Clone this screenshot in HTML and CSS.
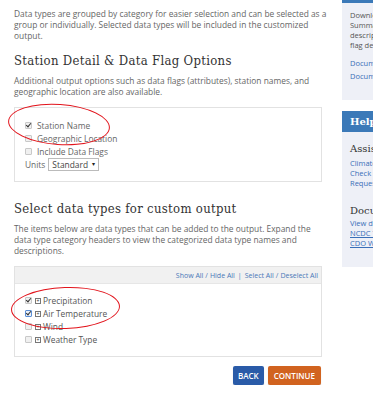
FILE: index.html
```html
<!DOCTYPE html>
<html lang="en">

<head>
  <meta charset="UTF-8" />
  <meta name="viewport" content="width=device-width, initial-scale=1.0" />
  <title>Custom Output</title>
  <link rel="stylesheet" href="styles.css">
</head>

<body>
  <div class="page">
    <div class="main">
      <p class="intro">Data types are grouped by category for easier selection and can be selected as a group or individually. Selected data types will be included in the customized output.</p>

      <h2>Station Detail &amp; Data Flag Options</h2>
      <p>Additional output options such as data flags (attributes), station names, and geographic location are also available.</p>

      <div class="box options">
        <div class="row"><span class="check on"></span>Station Name</div>
        <div class="row"><span class="check"></span>Geographic Location</div>
        <div class="row"><span class="check"></span>Include Data Flags</div>
        <div class="row">Units <span class="select">Standard <span class="arrow">&#9662;</span></span></div>
        <div class="circle circle-one"></div>
      </div>

      <h2 class="second">Select data types for custom output</h2>
      <p>The items below are data types that can be added to the output. Expand the data type category headers to view the categorized data type names and descriptions.</p>

      <div class="box types">
        <div class="box-head">
          <a href="#">Show All</a> / <a href="#">Hide All</a> <span class="sep">|</span> <a href="#">Select All</a> / <a href="#">Deselect All</a>
        </div>
        <div class="box-body">
          <div class="row"><span class="check on"></span><span class="plus">+</span>Precipitation</div>
          <div class="row"><span class="check on blue"></span><span class="plus">+</span>Air Temperature</div>
          <div class="row"><span class="check"></span><span class="plus">+</span>Wind</div>
          <div class="row"><span class="check"></span><span class="plus">+</span>Weather Type</div>
        </div>
        <div class="circle circle-two"></div>
      </div>

      <div class="actions">
        <button class="btn back">BACK</button>
        <button class="btn continue">CONTINUE</button>
      </div>
    </div>

    <div class="side">
      <div class="panel first">
        <p>Download the<br>Summary file<br>descriptions and<br>flag definitions</p>
        <a href="#">Documentation</a>
        <a href="#">Documentation</a>
      </div>

      <div class="panel help">
        <div class="panel-head">Help</div>
        <h3>Assistance</h3>
        <a href="#">Climate Data</a>
        <a href="#">Check Order</a>
        <a href="#">Request Help</a>
        <h3 class="docs">Documentation</h3>
        <a href="#">View data</a>
        <a href="#" class="under">NCDC Tools</a>
        <a href="#" class="under">CDO Web</a>
      </div>
    </div>
  </div>
</body>

</html>
```

FILE: styles.css
```css
body {
  margin: 0;
  padding: 0;
  background: #fff;
  font-family: "Open Sans", "Liberation Sans", Arial, sans-serif;
  font-size: 8.4px;
  line-height: 11px;
  color: #666;
  overflow: hidden;
}

.page {
  display: flex;
  width: 373px;
  overflow: hidden;
}

.main {
  position: relative;
  width: 308px;
  margin-left: 14px;
  flex-shrink: 0;
}

p {
  margin: 0;
}

.intro {
  padding-top: 8px;
  margin-right: -10px;
}

h2 {
  font-family: "DejaVu Serif", "Liberation Serif", serif;
  font-stretch: condensed;
  font-weight: normal;
  font-size: 13px;
  line-height: 18px;
  color: #333;
  margin: 11px 0 5px;
  letter-spacing: 0.3px;
}

h2.second {
  margin-top: 18px;
}

.box {
  position: relative;
  border: 1px solid #e2e2e2;
  margin-top: 10px;
}

.options {
  padding: 11px 10px 10px;
}

.row {
  display: flex;
  align-items: center;
  height: 13px;
  white-space: nowrap;
}

.check {
  display: inline-block;
  width: 5px;
  height: 5px;
  border: 1px solid #c8c8c8;
  border-radius: 1px;
  background: #f0f0f0;
  margin-right: 5px;
  position: relative;
}

.check.on::after {
  content: "";
  position: absolute;
  left: 1px;
  top: -1px;
  width: 2px;
  height: 4px;
  border: solid #333;
  border-width: 0 1.5px 1.5px 0;
  transform: rotate(40deg);
}

.check.blue {
  border-color: #5b8fd6;
  background: #eaf1fb;
}

.select {
  display: inline-flex;
  align-items: center;
  height: 11px;
  margin-left: 3px;
  padding: 0 3px;
  border: 1px solid #bbb;
  color: #444;
}

.arrow {
  font-size: 6px;
  margin-left: 4px;
  color: #222;
}

.box-head {
  height: 16px;
  background: #f1f1f1;
  border-bottom: 1px solid #e6e6e6;
  display: flex;
  align-items: center;
  justify-content: flex-end;
  gap: 2px;
  padding-right: 3px;
  font-size: 7px;
  color: #4a78b8;
}

.box-head a {
  color: #4a78b8;
  text-decoration: none;
}

.sep {
  color: #4a78b8;
  margin: 0 1px;
}

.box-body {
  padding: 10px 10px 10px;
  color: #555;
}

.box-body .check {
  margin-right: 3px;
}

.plus {
  display: inline-flex;
  align-items: center;
  justify-content: center;
  width: 4px;
  height: 4px;
  border: 1px solid #777;
  font-size: 5px;
  line-height: 4px;
  margin-right: 2px;
  color: #333;
}

.circle {
  position: absolute;
  border: 1.5px solid #e2141c;
  border-radius: 50%;
  pointer-events: none;
}

.circle-one {
  left: -7px;
  top: -4px;
  width: 100px;
  height: 39px;
  transform: rotate(4deg);
}

.circle-two {
  left: -4px;
  top: 20px;
  width: 107px;
  height: 40px;
  transform: rotate(-2deg);
}

.actions {
  display: flex;
  justify-content: flex-end;
  gap: 4px;
  margin-top: 9px;
  margin-right: 1px;
}

.btn {
  font-family: "Open Sans", "Liberation Sans", Arial, sans-serif;
  font-size: 8px;
  font-weight: 600;
  height: 19px;
  border: 0;
  border-radius: 2px;
  color: #fff;
  padding: 0 6px;
  box-shadow: 0 1px 1px rgba(0, 0, 0, 0.2);
}

.back {
  background: #2a5ba8;
  padding: 0 5px;
}

.continue {
  background: #d1631f;
}

.side {
  margin-left: 20px;
  width: 200px;
  flex-shrink: 0;
}

.panel {
  background: #eef0f7;
  padding: 0 8px;
}

.panel a {
  display: block;
  color: #3a6fb8;
  text-decoration: none;
  font-size: 7.5px;
  line-height: 10px;
  white-space: nowrap;
}

.panel.first {
  border-top: 3px solid #3b79b8;
  padding-top: 7px;
  box-sizing: border-box;
  height: 100px;
}

.panel.first p {
  font-size: 7.5px;
  line-height: 10px;
  color: #555;
  margin-bottom: 7px;
  white-space: nowrap;
}

.panel.first a {
  line-height: 13px;
}

.panel.help {
  margin-top: 11px;
  height: 156px;
  padding: 0;
}

.panel-head {
  background: #3b79b8;
  color: #fff;
  font-family: "DejaVu Serif", "Liberation Serif", serif;
  font-weight: bold;
  font-size: 10px;
  height: 21px;
  line-height: 21px;
  padding-left: 8px;
}

.help h3,
.help a {
  margin-left: 8px;
}

.help h3 {
  font-family: "DejaVu Serif", "Liberation Serif", serif;
  font-weight: normal;
  font-size: 10px;
  color: #333;
  margin-top: 10px;
  margin-bottom: 2px;
  line-height: 14px;
  white-space: nowrap;
}

.help h3.docs {
  margin-top: 16px;
  margin-bottom: 0;
}

.help a.under {
  text-decoration: underline;
}
```
